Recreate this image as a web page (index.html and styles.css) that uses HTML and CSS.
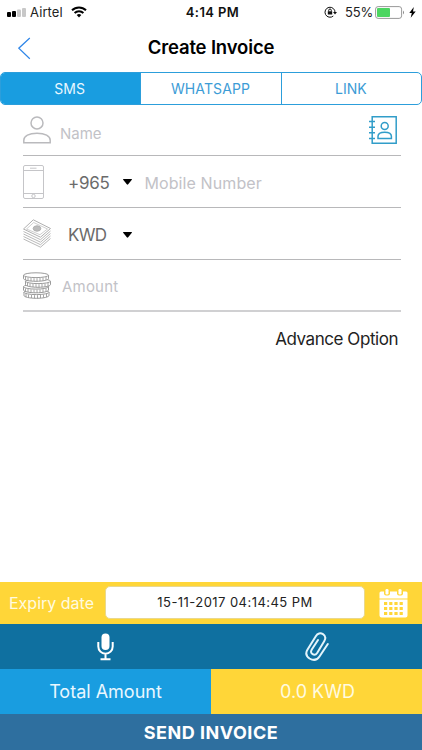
FILE: index.html
```html
<!DOCTYPE html>
<html lang="en">
<head>
<meta charset="utf-8">
<title>Create Invoice</title>
<link rel="stylesheet" href="styles.css">
</head>
<body>
<main class="app">
  <header class="status">
    <div class="status-left">
      <svg width="19" height="9" viewBox="0 0 19 9"><rect y="4" width="4" height="5" rx="1"/><rect x="5" y="3" width="4" height="6" rx="1"/><g fill="#c8c8c8"><rect x="10" y="1.500" width="4" height="7.500" rx="1"/><rect x="15" width="4" height="9" rx="1"/></g></svg>
      <span class="carrier">Airtel</span>
      <svg class="wifi" width="16" height="12" viewBox="0 0 16 12" fill="none" stroke="#000" stroke-width="2"><path d="M1 4.300a10 10 0 0 1 14 0M3.600 7a6.300 6.300 0 0 1 8.800 0"/><path d="M5.700 9a3.400 3.400 0 0 1 4.600 0L8 11.500z" fill="#000" stroke="none"/></svg>
    </div>
    <span class="clock">4:14 PM</span>
    <div class="status-right">
      <svg width="13" height="12" viewBox="0 0 13 12" fill="none" stroke="#111"><path d="M9.300 10A5 5 0 1 1 11 6.500"/><path d="M9 6h4l-2 2.500z" fill="#111" stroke="none"/><rect x="3.800" y="5.300" width="4.400" height="3.200" fill="#111" stroke="none"/><path d="M4.700 5.500V4.300a1.300 1.300 0 0 1 2.600 0v1.200"/></svg>
      <span class="percent">55%</span>
      <svg width="30" height="13" viewBox="0 0 30 13"><rect x=".6" y=".6" width="26" height="11.800" rx="2.500" fill="#fff" stroke="#999"/><rect x="2" y="2" width="13" height="9" rx="1" fill="#4cd661"/><path d="M28 4.500q2 2 0 4z" fill="#888"/></svg>
      <svg class="bolt" width="7" height="11" viewBox="0 0 7 11"><path d="M4.800 0 .3 6h2.500L1.700 10.700 6.700 4.500H4z"/></svg>
    </div>
  </header>
  <nav class="nav">
    <svg class="back" width="14" height="23" viewBox="0 0 14 23" fill="none" stroke="#2f86e8" stroke-width="1.200"><path d="M11.800 1 .8 11.200 11.800 21.700"/></svg>
    <h1 class="title">Create Invoice</h1>
  </nav>
  <div class="tabs">
    <div class="tab active"><span class="t-sms">SMS</span></div>
    <div class="tab"><span class="t-wa">WHATSAPP</span></div>
    <div class="tab"><span class="t-link">LINK</span></div>
  </div>
  <section class="form">
    <div class="row first">
      <svg class="icon" width="28" height="28" viewBox="0 0 28 28" fill="none" stroke="#bababd" stroke-width="1.500"><circle cx="14" cy="6.900" r="6"/><path d="M.8 26.800v-2.500C.8 20 6 17.300 14 17.300s13.200 2.700 13.200 7v2.500z"/></svg>
      <span class="hint name">Name</span>
      <svg class="contacts" width="28" height="28" viewBox="0 0 28 28" fill="none" stroke="#319dc9" stroke-width="1.500"><path d="M3.200.8h24v26.400h-24zM0 5.500h6M0 11.200h6M0 16.700h6M0 22.400h6"/><circle cx="15.700" cy="10" r="3.500"/><path d="M9 22.500v-2.200c0-3 2.800-4.100 6.700-4.100s6.700 1.100 6.700 4.100v2.200z"/></svg>
    </div>
    <div class="row">
      <svg class="icon phone" width="21" height="34" viewBox="0 0 21 34" fill="none" stroke="#c5c5c8"><rect x=".5" y=".5" width="20" height="33" rx="1.500"/><path d="M.5 5.500h20M.5 28.500h20M7 3.200h6.500"/><circle cx="10.500" cy="31" r="1.700"/></svg>
      <span class="value code">+965</span>
      <svg class="caret" width="9" height="6" viewBox="0 0 9 6"><path d="M.5 0h8q.8 0 .3.700L5.200 5.300q-.7.800-1.400 0L.2.700Q-.2 0 .5 0z"/></svg>
      <span class="hint mobile">Mobile Number</span>
    </div>
    <div class="row">
      <svg class="icon cash" width="28" height="29" viewBox="0 0 28 29" fill="none" stroke="#b0b0b0"><path d="M.5 10 10.300.8 27.500 9.500 17.500 18.200z"/><path d="M3.500 10 10.700 3.500 24.500 10 17 15.700z" stroke-width=".6"/><ellipse cx="14" cy="9.500" rx="3.800" ry="2.700" fill="#bbb"/><path d="m.5 12.500 17 8.200 10-8.700M.5 15l17 8.200 10-8.700M.5 17.500l17 8.200 10-8.700M.5 20l17 8.200 10-8.700" stroke-width=".9"/></svg>
      <span class="value currency">KWD</span>
      <svg class="caret cur" width="9" height="6" viewBox="0 0 9 6"><path d="M.5 0h8q.8 0 .3.700L5.200 5.300q-.7.800-1.400 0L.2.700Q-.2 0 .5 0z"/></svg>
    </div>
    <div class="row last">
      <svg class="icon coins" width="28" height="27" viewBox="0 0 28 27"><defs><g id="coin" fill="#fff" stroke="#909090" stroke-width=".9"><path d="M.5 2.500v3.500c0 1.500 5.400 2.800 12.500 2.800S25.500 7.500 25.500 6V2.500"/><ellipse cx="13" cy="2.700" rx="12.500" ry="2.400"/><path d="M2.500 4.500v3M5 5v3M8 5.500v3M11 5.700v3M14 5.700v3M17 5.500v3M20 5.200v3M23 4.500v3" stroke-width=".8"/></g></defs><use href="#coin" x=".5" y="17.500"/><use href="#coin" y="12"/><use href="#coin" x="2" y="6.500"/><use href="#coin" y=".5"/></svg>
      <span class="hint amount">Amount</span>
    </div>
    <div class="advance"><span class="t-adv">Advance Option</span></div>
  </section>
  <footer class="footer">
    <div class="expiry">
      <span class="t-exp">Expiry date</span>
      <div class="date"><span class="t-date">15-11-2017 04:14:45 PM</span></div>
      <svg class="calendar" width="29" height="29" viewBox="0 0 29 29" fill="#fff"><path d="M2 2.500h25q1.500 0 1.500 1.500v5.500H.5V4Q.5 2.500 2 2.500zM.5 10.500h28v16q0 2-2 2h-24q-2 0-2-2z"/><g fill="#ffd638"><rect x="5" y="0" width="6" height="6.500" rx="2"/><rect x="18" y="0" width="6" height="6.500" rx="2"/></g><rect x="6.500" y="0" width="3" height="5.500" rx="1.300"/><rect x="19.500" y="0" width="3" height="5.500" rx="1.300"/><path d="M5 14.500h19M5 19.500h19M5 24.500h19" stroke="#ffd638" stroke-width="3" stroke-dasharray="3.200 2"/></svg>
    </div>
    <div class="attach">
      <div class="cell"><svg class="mic" width="17" height="28" viewBox="0 0 17 28"><rect x="4.500" y=".5" width="8" height="16.500" rx="4" fill="#fff"/><path d="M1.300 9v4.500a7.200 7.200 0 0 0 14.400 0V9M8.500 20.500V26M3.500 26.200h10" fill="none" stroke="#fff" stroke-width="2"/></svg></div>
      <div class="cell"><svg class="clip" width="24" height="29" viewBox="0 0 24 29" fill="none" stroke="#e4f4fb" stroke-width="2" stroke-linecap="round"><path d="M22.800 12 14.500 24.500C12 28.300 8 28.500 4.500 26.500.8 24 .5 21 2.400 17.800L10.800 4.200C12.600 1.200 15.500.6 18 2.200c2.700 1.800 2.900 4.300 1.200 7L12.300 20.700c-1.300 2-3 2.500-4.700 1.500-1.800-1.100-2-2.800-.8-4.700L13 8"/></svg></div>
    </div>
    <div class="totals">
      <div class="cell total"><span class="t-total">Total Amount</span></div>
      <div class="cell sum"><span class="t-sum">0.0 KWD</span></div>
    </div>
    <div class="send"><span class="t-send">SEND INVOICE</span></div>
  </footer>
</main>
</body>
</html>
```
FILE: styles.css
```css
* { box-sizing: border-box; }
body { margin: 0; font-family: Inter, "Liberation Sans", sans-serif; background: #fff; }
svg { display: block; flex: none; }
span, h1 { white-space: nowrap; }
.app { width: 422px; height: 750px; display: flex; flex-direction: column; overflow: hidden; }
.status { height: 24px; display: grid; grid-template-columns: 1fr auto 1fr; align-items: center; padding: 0 6px 0 7px; font-size: 13px; color: #222; }
.status-left, .status-right { display: flex; align-items: center; }
.status-right { justify-content: flex-end; }
.carrier { margin-left: 4px; letter-spacing: .1px; }
.wifi { margin-left: 8px; }
.clock { margin-left: 2px; font-weight: 600; color: #111; letter-spacing: .4px; }
.percent { margin: 0 2px 0 8px; letter-spacing: -.2px; }
.bolt { margin-left: 4px; }
.nav { height: 48px; display: grid; grid-template-columns: 50px 1fr 50px; align-items: center; }
.back { margin-left: 18px; }
.title { margin: -2px 0 0; text-align: center; font-size: 18.500px; font-weight: 600; letter-spacing: -.15px; }
.tabs { height: 33px; display: flex; border: 1px solid #2c9edb; border-radius: 5px; overflow: hidden; font-size: 14px; color: #3c9cd6; }
.tab { flex: 1; display: flex; align-items: center; justify-content: center; border-left: 1px solid #2c9edb; }
.tab.active { background: #199de0; color: #e9f7ff; border-left: 0; }
.t-sms { margin-right: 2px; }
.t-wa { margin-right: 1px; letter-spacing: .1px; }
.t-link { margin-right: 1px; }
.form { flex: 1; padding: 0 21px 0 23px; }
.row { height: 52px; display: flex; align-items: center; border-bottom: 1px solid #b8b8ba; }
.row.first { height: 51px; }
.row.last { border-bottom: 2px solid #d0d0d2; }
.hint { color: #c2c2c7; font-size: 16px; }
.value { color: #6b6b6b; font-size: 17px; letter-spacing: -.3px; }
.name { margin: 7px 0 0 9px; font-size: 15px; }
.contacts { margin: 0 4px 0 auto; }
.code { margin: 2px 0 0 24px; }
.caret { margin-left: 14px; }
.mobile { margin: 2px 0 0 12px; letter-spacing: .1px; }
.currency { margin: 2px 0 0 17px; letter-spacing: -.7px; }
.cur { margin: 2px 0 0 17px; }
.amount { margin: 3px 0 0 11px; font-size: 15px; letter-spacing: .2px; }
.advance { height: 53px; display: flex; align-items: center; justify-content: flex-end; padding-right: 3px; font-size: 17px; letter-spacing: -.45px; color: #222; }
.expiry { height: 42px; display: flex; align-items: center; background: #ffd638; padding: 0 14px 0 9px; font-size: 16px; color: #fffbe0; }
.date { width: 260px; height: 33px; margin: -2px 0 0 auto; display: flex; align-items: center; justify-content: center; background: #fff; border: 1px solid #e9d88d; border-radius: 5px; font-size: 13px; letter-spacing: .45px; color: #222; }
.calendar { margin-left: 14px; }
.attach { height: 45px; display: flex; background: #0f70a0; }
.cell { flex: 1; display: flex; align-items: center; justify-content: center; }
.totals { height: 45px; display: flex; font-size: 18px; }
.total { background: #199de0; color: #e9f7ff; }
.sum { background: #ffd638; color: #fffbe0; }
.t-sum { margin-left: 2px; }
.send { height: 36px; display: flex; align-items: center; justify-content: center; background: #2e6f9f; color: #fff; font-size: 18px; font-weight: 700; letter-spacing: .5px; }
```
